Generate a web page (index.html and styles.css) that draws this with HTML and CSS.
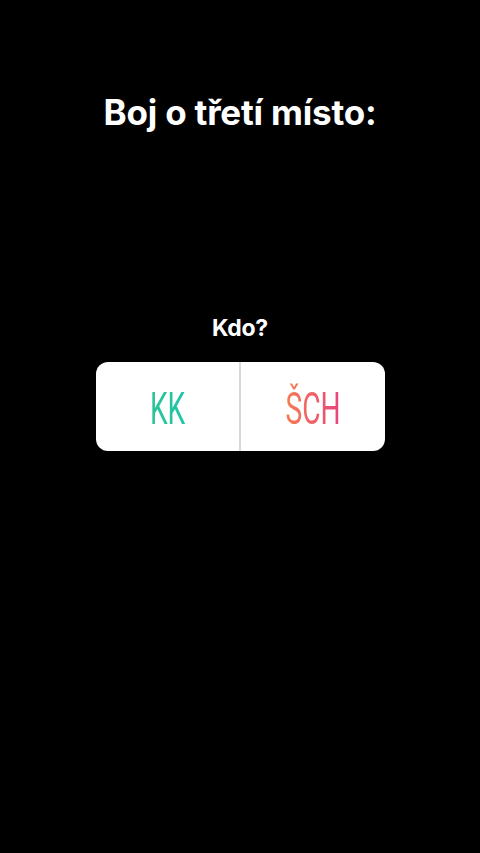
FILE: index.html
```html
<!DOCTYPE html>
<html>
<head>
<meta charset="utf-8">
<link rel="stylesheet" href="styles.css">
</head>
<body>
<div class="screen">
  <h1 class="title">Boj o třetí místo:</h1>
  <div class="poll">
    <div class="question">Kdo?</div>
    <div class="card">
      <div class="option"><span class="label kk">KK</span></div>
      <div class="divider"></div>
      <div class="option"><span class="label sch">ŠCH</span></div>
    </div>
  </div>
</div>
</body>
</html>
```
FILE: styles.css
```css
html, body {
  margin: 0;
  padding: 0;
  background: #000;
}
.screen {
  width: 480px;
  height: 853px;
  background: #000;
  display: flex;
  flex-direction: column;
  align-items: center;
  font-family: "Inter", "Liberation Sans", sans-serif;
  color: #fff;
}
.title {
  margin: 88px 0 0;
  font-size: 35px;
  font-weight: 700;
  line-height: 48px;
  letter-spacing: -0.2px;
}
.poll {
  margin-top: 177px;
  display: flex;
  flex-direction: column;
  align-items: center;
}
.question {
  font-size: 23px;
  font-weight: 700;
  line-height: 30px;
  letter-spacing: -0.3px;
}
.card {
  margin-top: 19px;
  width: 289px;
  height: 89px;
  background: #fff;
  border-radius: 12px;
  display: flex;
  align-items: stretch;
}
.option {
  flex: 1;
  display: flex;
  align-items: center;
  justify-content: center;
}
.divider {
  width: 2px;
  background: #d9d9d9;
}
.label {
  font-family: "Roboto", "DejaVu Sans", sans-serif;
  font-weight: 400;
  font-size: 44px;
  line-height: 1.5;
  padding-top: 4px;
  display: inline-block;
  transform: scaleX(0.64);
  -webkit-background-clip: text;
  background-clip: text;
  color: transparent;
}
.kk {
  background-image: linear-gradient(90deg, #2cc497, #1ec5a6);
}
.sch {
  background-image: linear-gradient(90deg, #f47d52, #e8447e);
}
```
